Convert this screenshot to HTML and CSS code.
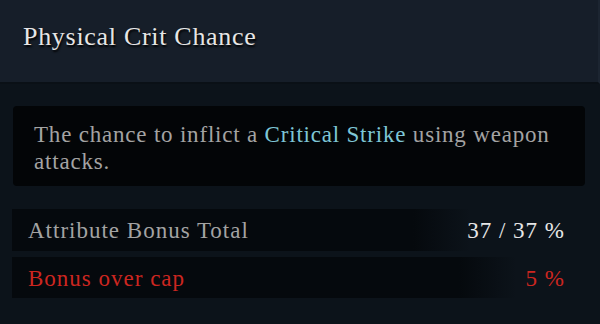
FILE: index.html
```html
<!DOCTYPE html>
<html lang="en">
<head>
  <meta charset="UTF-8">
  <title>Physical Crit Chance</title>
  <link rel="stylesheet" href="styles.css">
</head>
<body>
  <div class="tooltip">
    <div class="tip-head">
      <h1>Physical Crit Chance</h1>
    </div>
    <div class="tip-body">
      <div class="desc">
        <span>The chance to inflict a</span> <span class="kw">Critical Strike</span> <span>using weapon</span><br>
        <span>attacks.</span>
      </div>
      <div class="stats">
        <div class="stat">
          <span class="stat-name">Attribute Bonus Total</span>
          <span class="stat-val">37 / 37 %</span>
        </div>
        <div class="stat stat-over">
          <span class="stat-name">Bonus over cap</span>
          <span class="stat-val">5 %</span>
        </div>
      </div>
    </div>
  </div>
</body>
</html>
```

FILE: styles.css
```css
:root {
  --head-bg: #161e29;
  --body-bg: #0c131a;
  --desc-bg: #030507;
  --row-bg: #05090d;
  --text-dim: #a3a3a3;
  --text-bright: #e6e6e6;
  --keyword: #7ec6d6;
  --warn: #cc2620;
}
html, body {
  margin: 0;
  height: 100%;
  background: var(--body-bg);
}
body {
  font-family: "Liberation Serif", "DejaVu Serif", serif;
}
.tooltip {
  width: 600px;
  height: 324px;
  display: flex;
  flex-direction: column;
  background: var(--body-bg);
}
.tip-head {
  height: 84px;
  box-sizing: border-box;
  padding: 22px 0 0 23px;
  background: var(--head-bg);
  border-bottom: 2px solid #0a1016;
  border-right: 2px solid #1c2531;
}
.tip-head h1 {
  margin: 0;
  font-size: 26px;
  letter-spacing: 0.7px;
  font-weight: normal;
  color: var(--text-bright);
  text-shadow: 1px 2px 2px #000;
}
.tip-body {
  padding: 22px 15px 0 12px;
}
.desc {
  margin-left: 1px;
  padding: 15px 20px 13px 21px;
  height: 80px;
  box-sizing: border-box;
  background: var(--desc-bg);
  border-radius: 4px;
  font-size: 23px;
  letter-spacing: 0.8px;
  line-height: 27px;
  color: var(--text-dim);
}
.kw { color: var(--keyword); }
.stats {
  margin-top: 23px;
  display: flex;
  flex-direction: column;
  gap: 6px;
}
.stat {
  height: 42px;
  display: flex;
  align-items: center;
  justify-content: space-between;
  padding: 2px 20px 0 16px;
  box-sizing: border-box;
  font-size: 23px;
  letter-spacing: 1px;
  background: linear-gradient(90deg, var(--row-bg) 0%, var(--row-bg) 70%, rgba(5, 9, 13, 0) 80%);
}
.stat-name { color: var(--text-dim); }
.stat-val { color: var(--text-bright); }
.stat-over {
  height: 41px;
  background: linear-gradient(90deg, var(--row-bg) 0%, var(--row-bg) 78%, rgba(5, 9, 13, 0) 88%);
}
.stat-over .stat-name,
.stat-over .stat-val { color: var(--warn); }
```
